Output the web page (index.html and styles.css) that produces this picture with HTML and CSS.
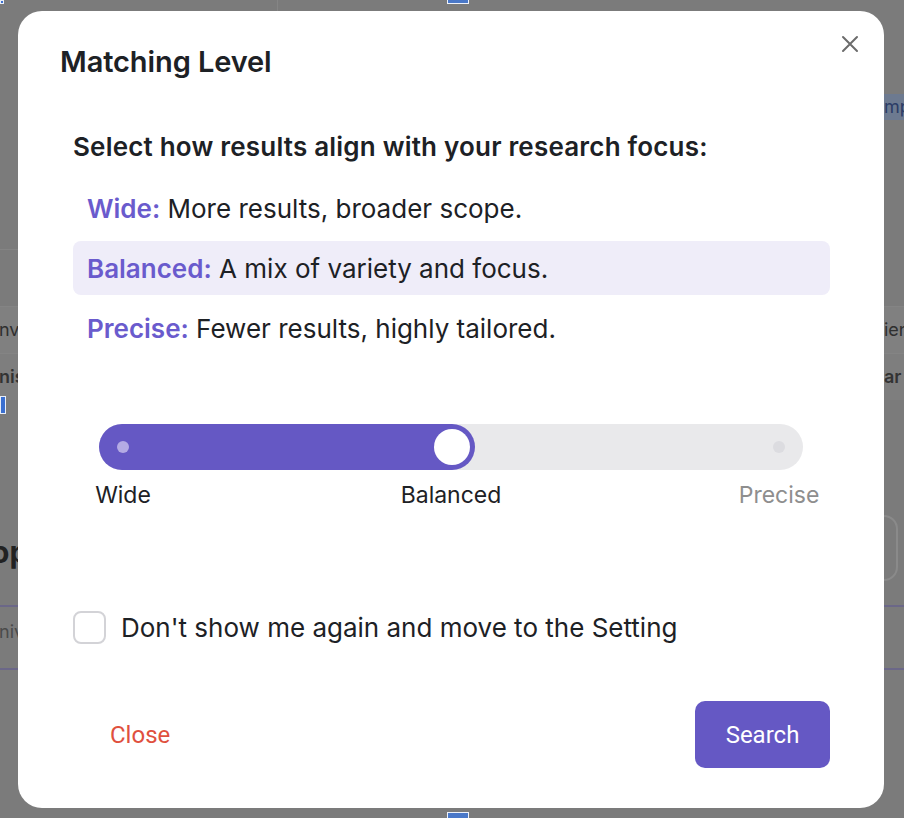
FILE: index.html
```html
<!DOCTYPE html>
<html lang="en">
<head>
<meta charset="utf-8">
<title>Matching Level</title>
<link rel="stylesheet" href="styles.css">
</head>
<body>
<div class="page">
  <div class="strip strip-left">
    <div class="bg-chip-top"></div>
    <div class="bg-gap-a"></div>
    <div class="bg-rule"></div>
    <div class="bg-band"><span class="bg-text">nvironment</span></div>
    <div class="bg-row"><span class="bg-text bg-bold">nisation</span></div>
    <div class="bg-chip"></div>
    <div class="bg-big">op</div>
    <div class="bg-prule"></div>
    <div class="bg-row2"><span class="bg-text bg-light">niversity</span></div>
    <div class="bg-prule"></div>
  </div>
  <div class="strip-mid">
    <div class="bg-top">
      <div class="bg-vline"></div>
      <div class="bg-mchip"></div>
    </div>
    <div class="bg-mchip bg-mchip-bottom"></div>
  </div>
  <div class="strip strip-right">
    <div class="bg-gap-b"></div>
    <div class="bg-hl"><span class="bg-text">mp</span></div>
    <div class="bg-gap-c"></div>
    <div class="bg-band"><span class="bg-text">ient</span></div>
    <div class="bg-row"><span class="bg-text bg-bold">ar</span></div>
    <div class="bg-box"></div>
    <div class="bg-prule bg-prule-r"></div>
    <div class="bg-row2"></div>
    <div class="bg-prule"></div>
  </div>
</div>

<div class="overlay">
  <div class="modal" role="dialog" aria-labelledby="mtitle">
    <button class="modal-x" aria-label="Close">
      <svg width="18" height="18" viewBox="0 0 18 18"><path d="M2 2 L16 16 M16 2 L2 16" stroke="currentColor" stroke-width="2" stroke-linecap="round" fill="none"/></svg>
    </button>
    <h2 class="modal-title" id="mtitle">Matching Level</h2>
    <div class="modal-body">
      <p class="prompt">Select how results align with your research focus:</p>
      <ul class="options">
        <li class="option"><span class="opt-label">Wide:</span> More results, broader scope.</li>
        <li class="option is-active"><span class="opt-label">Balanced:</span> A mix of variety and focus.</li>
        <li class="option"><span class="opt-label">Precise:</span> Fewer results, highly tailored.</li>
      </ul>
      <div class="slider">
        <div class="track">
          <div class="fill" style="width:376px">
            <span class="dot dot-on"></span>
            <span class="thumb"></span>
          </div>
          <span class="dot dot-off"></span>
        </div>
        <div class="ticks">
          <span class="tick"><span>Wide</span></span>
          <span class="tick"><span>Balanced</span></span>
          <span class="tick tick-muted"><span>Precise</span></span>
        </div>
      </div>
      <label class="check">
        <span class="check-box"></span>
        <span class="check-text">Don't show me again and move to the Setting</span>
      </label>
      <div class="actions">
        <button class="btn-close">Close</button>
        <button class="btn-search">Search</button>
      </div>
    </div>
  </div>
</div>
</body>
</html>
```
FILE: styles.css
```css
* { box-sizing: border-box; }
html, body { margin: 0; padding: 0; }
body {
  width: 904px;
  height: 818px;
  overflow: hidden;
  background: #7b7b7b;
  font-family: Inter, "Noto Sans", "Liberation Sans", sans-serif;
  color: #1d2125;
}

/* ---------- dimmed page underneath ---------- */
.page {
  display: grid;
  grid-template-columns: 18px 1fr 20px;
  height: 818px;
}
.strip { overflow: hidden; display: flex; flex-direction: column; }
.bg-text {
  display: block;
  white-space: nowrap;
  font-size: 18px;
  color: #2f2f2f;
  line-height: 1;
}
.strip-left .bg-text { margin-left: -1px; }
.bg-bold { font-weight: 600; color: #333; }
.bg-light { color: #4a4a4a; }
.bg-chip-top {
  width: 4px; height: 4px;
  background: #3a6fd0;
  border: 1px solid #e8eef8;
}
.bg-gap-a { height: 245px; }
.bg-rule { height: 1px; background: #848484; margin-bottom: 56px; }
.bg-band {
  height: 48px;
  background: #808080;
  border-top: 1px solid #848484;
  border-bottom: 1px solid #848484;
  display: flex; align-items: center;
}
.bg-row {
  height: 46px;
  display: flex; align-items: center;
  background: #7e7e7e;
}
.bg-chip {
  width: 6px; height: 18px;
  border: 1px solid #e8eef8;
  background: #3a6fd0;
  margin-top: -4px;
}
.bg-big {
  margin-top: 118px;
  margin-left: -9px;
  font-size: 30px; font-weight: 700; color: #222;
  height: 40px; line-height: 40px; overflow: hidden;
  white-space: nowrap;
}
.bg-prule { height: 2px; background: #6b6788; margin-top: 12px; }
.strip-left .bg-big + .bg-prule { margin-top: 33px; }
.bg-row2 { height: 49px; display: flex; align-items: center; }

.strip-mid { display: flex; flex-direction: column; justify-content: space-between; }
.bg-top { display: flex; align-items: flex-start; }
.bg-vline { width: 1px; height: 11px; background: #858585; margin-left: 259px; }
.bg-mchip {
  width: 22px; height: 4px;
  background: #4a78c8;
  border: 1px solid #eef2fa;
  border-top: 0;
  margin-left: 169px;
}
.bg-mchip-bottom {
  height: 6px;
  margin-left: 429px;
  border-top: 1px solid #eef2fa;
  border-bottom: 0;
}

.bg-gap-b { height: 94px; }
.bg-hl { height: 26px; background: #6d7a90; display: flex; align-items: center; }
.bg-hl .bg-text { color: #2b3c66; }
.bg-gap-c { height: 186px; }
.strip-right .bg-box {
  width: 30px; height: 66px;
  border: 2px solid #8a8a8a;
  border-radius: 14px;
  margin-left: -16px;
  margin-top: 115px;
}
.bg-prule-r { margin-top: 24px; }

/* ---------- overlay + modal ---------- */
.overlay {
  position: fixed;
  inset: 0;
  padding: 11px 20px 10px 18px;
}
.modal {
  position: relative;
  height: 100%;
  background: #ffffff;
  border-radius: 24px;
  display: flex;
  flex-direction: column;
}
.modal-x {
  position: absolute;
  top: 19px; right: 20px;
  width: 28px; height: 28px;
  padding: 0; border: 0; background: none;
  color: #6c6c6c;
  display: flex; align-items: center; justify-content: center;
}
.modal-title {
  margin: 0;
  padding: 34px 0 0 42px;
  font-size: 29px;
  font-weight: 600;
  line-height: 34px;
  color: #1d2125;
  letter-spacing: -0.1px;
}
.modal-body {
  flex: 1;
  display: flex;
  flex-direction: column;
  padding: 0 54px 40px 55px;
}
.prompt {
  margin: 52px 0 0 0;
  font-size: 26px;
  font-weight: 600;
  line-height: 32px;
  letter-spacing: 0.2px;
}
.options {
  list-style: none;
  margin: 18px 0 0 0;
  padding: 0;
  display: flex;
  flex-direction: column;
  gap: 6px;
}
.option {
  height: 54px;
  display: flex;
  align-items: center;
  padding: 0 14px;
  border-radius: 8px;
  font-size: 26px;
  white-space: pre;
  color: #1d2125;
}
.option.is-active { background: #efedf9; }
.opt-label { color: #6a5bcd; font-weight: 600; }

.slider { margin: 69px 27px 0 26px; }
.track {
  height: 46px;
  border-radius: 23px;
  background: #e9e9eb;
  display: flex;
  align-items: center;
}
.fill {
  height: 46px;
  border-radius: 23px;
  background: #6558c4;
  display: flex;
  align-items: center;
  justify-content: space-between;
  padding: 0 5px 0 18px;
}
.dot { width: 12px; height: 12px; border-radius: 50%; }
.dot-on { background: #b4abe4; }
.dot-off { background: #dcdce0; margin-left: auto; margin-right: 18px; }
.thumb {
  width: 36px; height: 36px; border-radius: 50%;
  background: #ffffff;
}
.ticks {
  display: flex;
  justify-content: space-between;
  padding: 0 24px;
  margin-top: 11px;
  height: 28px;
}
.tick {
  width: 0;
  display: flex;
  justify-content: center;
  white-space: nowrap;
  font-size: 23px;
  line-height: 28px;
  color: #1d2125;
}
.tick-muted { color: #8e8e8e; }

.check {
  margin-top: 102px;
  display: flex;
  align-items: center;
  gap: 15px;
}
.check-box {
  width: 33px; height: 33px;
  border: 2px solid #d3d3d7;
  border-radius: 8px;
  flex: none;
}
.check-text { font-size: 26px; line-height: 32px; color: #1d2125; }

.actions {
  margin-top: auto;
  display: flex;
  justify-content: space-between;
  align-items: center;
}
.btn-close {
  border: 0; background: none;
  font-family: Roboto, "Liberation Sans", sans-serif;
  font-size: 24px;
  color: #e0503e;
  padding: 0 0 0 37px;
}
.btn-search {
  width: 135px; height: 67px;
  border: 0;
  border-radius: 10px;
  background: #6558c4;
  color: #ffffff;
  font-family: Roboto, "Liberation Sans", sans-serif;
  font-size: 24px;
}
```
